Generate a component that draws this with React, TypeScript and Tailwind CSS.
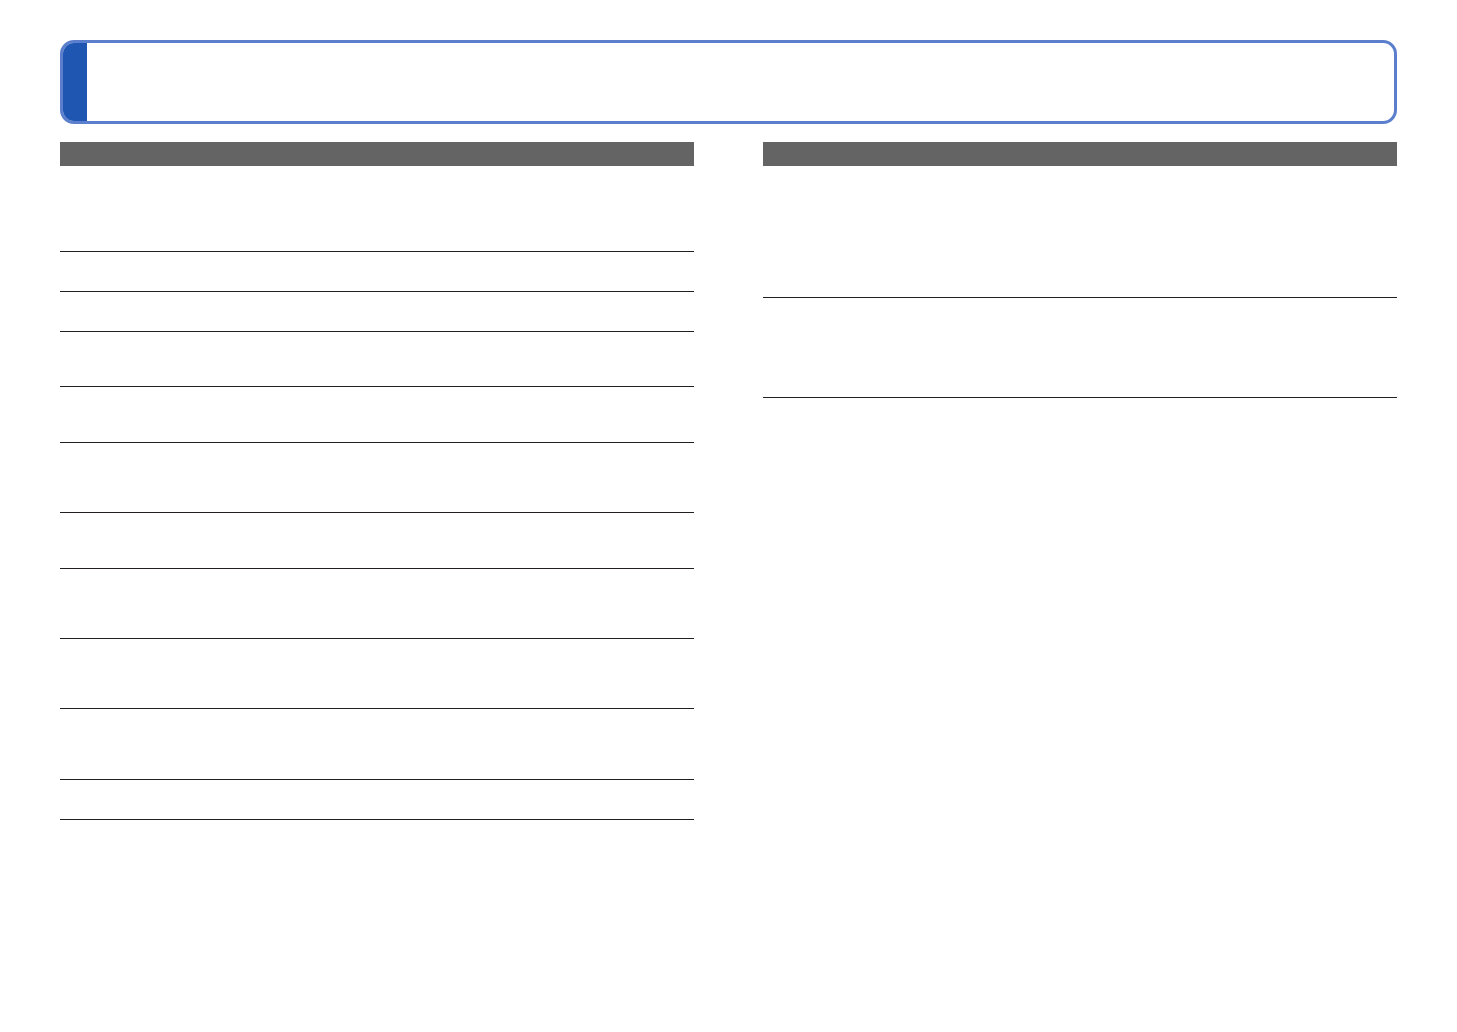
export default function App() {
  const leftRows = [85, 39, 39, 54, 55, 69, 55, 69, 69, 70, 39];
  const rightRows = [131, 99];
  return (
    <div className="w-[1457px] h-[1032px] bg-white pl-[60px] pt-[40px]" style={{ fontFamily: '"Liberation Sans", sans-serif' }}>
      <div className="w-[1337px] h-[84px] border-[3px] border-[#5b7fcd] rounded-[14px] overflow-hidden flex">
        <div className="w-[24px] h-full bg-[#1f56b1]" />
        <div className="flex-1" />
      </div>
      <div className="flex gap-[69px] mt-[18px]">
        <div className="w-[634px]">
          <div className="h-[24px] bg-[#646464]" />
          {leftRows.map((h, i) => (
            <div key={i} className="border-b border-[#231f20]" style={{ height: h + 1 }} />
          ))}
        </div>
        <div className="w-[634px]">
          <div className="h-[24px] bg-[#646464]" />
          {rightRows.map((h, i) => (
            <div key={i} className="border-b border-[#231f20]" style={{ height: h + 1 }} />
          ))}
        </div>
      </div>
    </div>
  );
}
